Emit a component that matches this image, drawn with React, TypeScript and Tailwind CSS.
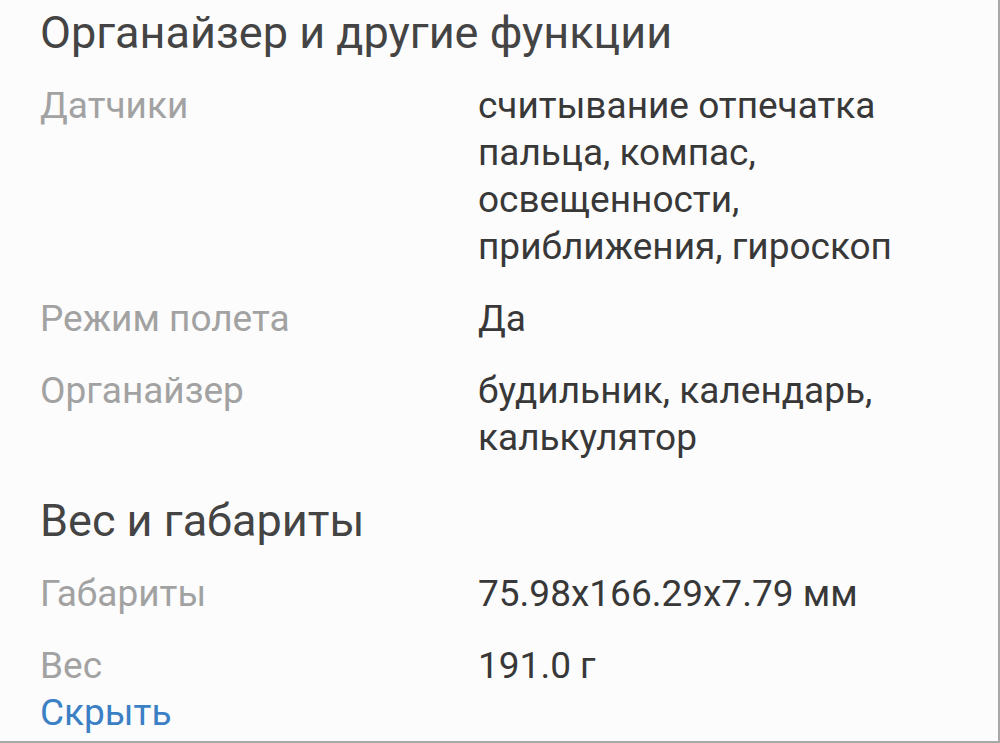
const groups = [
  {
    title: 'Органайзер и другие функции',
    rows: [
      { label: 'Датчики', value: 'считывание отпечатка пальца, компас, освещенности, приближения, гироскоп' },
      { label: 'Режим полета', value: 'Да' },
      { label: 'Органайзер', value: 'будильник, календарь, калькулятор' },
    ],
  },
  {
    title: 'Вес и габариты',
    rows: [
      { label: 'Габариты', value: '75.98x166.29x7.79 мм' },
      { label: 'Вес', value: '191.0 г' },
    ],
  },
]

export default function App() {
  return (
    <div className="h-[743px] w-[1000px] overflow-hidden border-r-2 border-b-2 border-[#a8a8a8] bg-[#fcfcfc] font-['Roboto',sans-serif]">
      <div className="flex flex-col pl-[40px] pr-[40px]">
        {groups.map((g, gi) => (
          <section key={g.title} className={gi === 0 ? 'pt-[5px]' : 'pt-[32px]'}>
            <h2 className="text-[45px] leading-[56px] text-[#444444]">{g.title}</h2>
            <div className="mt-[21px] flex flex-col gap-[25px]">
              {g.rows.map((r) => (
                <div key={r.label} className="flex text-[37px] leading-[47px]">
                  <div className="w-[438px] shrink-0 text-[#a2a2a2]">{r.label}</div>
                  <div className="flex-1 text-[#383838]">{r.value}</div>
                </div>
              ))}
            </div>
          </section>
        ))}
        <a className="text-[37px] leading-[47px] text-[#3b7fc4]">Скрыть</a>
      </div>
    </div>
  )
}
